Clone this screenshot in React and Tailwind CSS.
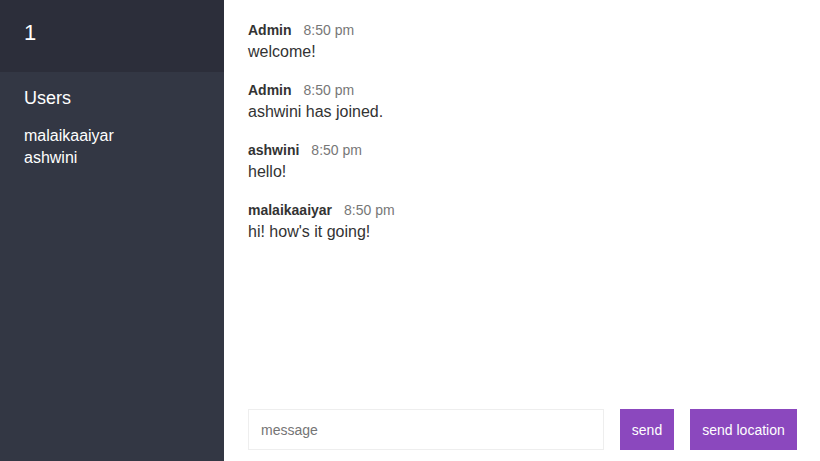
import React from 'react';

const users = ['malaikaaiyar', 'ashwini'];

const messages = [
  { name: 'Admin', time: '8:50 pm', text: 'welcome!' },
  { name: 'Admin', time: '8:50 pm', text: 'ashwini has joined.' },
  { name: 'ashwini', time: '8:50 pm', text: 'hello!' },
  { name: 'malaikaaiyar', time: '8:50 pm', text: "hi! how's it going!" },
];

const App = () => {
  return (
    <div
      className="flex h-[461px] w-[820px] overflow-hidden bg-white"
      style={{ fontFamily: '"Liberation Sans", Arial, sans-serif' }}
    >
      {/* Sidebar */}
      <div className="flex w-[224px] shrink-0 flex-col bg-[#333744] text-white">
        <div className="h-[72px] bg-[#2c2e3a] px-6 pt-[20px]">
          <h2 className="text-[22px] leading-[26px]">1</h2>
        </div>
        <div className="px-6 pt-[15px]">
          <h3 className="text-[18px] leading-[22px]">Users</h3>
          <ul className="mt-[16px] text-[16px] leading-[22px]">
            {users.map((u) => (
              <li key={u}>{u}</li>
            ))}
          </ul>
        </div>
      </div>

      {/* Chat */}
      <div className="flex flex-1 flex-col">
        <div className="flex-1 px-6 pt-[22px]">
          {messages.map((m, i) => (
            <div key={i} className="mb-[20px]">
              <p className="text-[14px] leading-[16px]">
                <span className="mr-3 font-bold text-[#333]">{m.name}</span>
                <span className="text-[#777]">{m.time}</span>
              </p>
              <p className="mt-[4px] text-[16px] leading-[20px] text-[#333]">{m.text}</p>
            </div>
          ))}
        </div>

        <div className="flex pb-[11px] pl-6 pr-[23px]">
          <form className="flex flex-1" onSubmit={(e) => e.preventDefault()}>
            <input
              autoFocus
              placeholder="message"
              className="mr-4 h-[41px] flex-1 border border-[#eeeeee] px-3 text-[14px] text-[#333] outline-none placeholder:text-[#757575]"
            />
            <button className="h-[41px] w-[54px] bg-[#8b48be] pt-px text-[14px] text-white">send</button>
          </form>
          <button className="ml-4 h-[41px] w-[107px] bg-[#8b48be] pt-px text-[14px] text-white">send location</button>
        </div>
      </div>
    </div>
  );
};

export default App;
